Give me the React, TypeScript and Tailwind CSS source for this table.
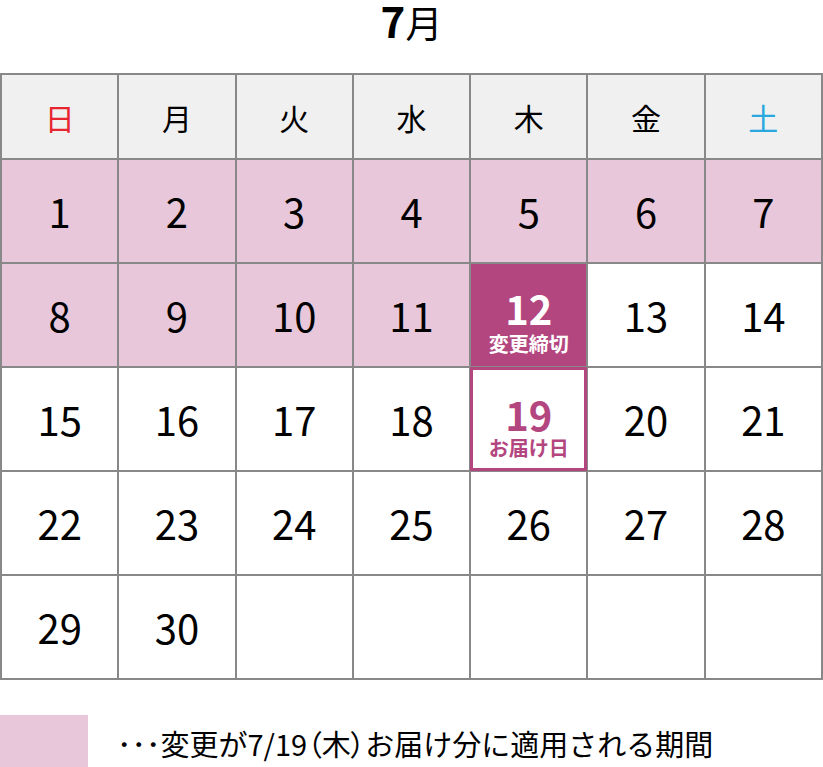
import React from 'react'

const weekdays = [
  { label: '日', color: 'text-[#e8242e]' },
  { label: '月', color: 'text-black' },
  { label: '火', color: 'text-black' },
  { label: '水', color: 'text-black' },
  { label: '木', color: 'text-black' },
  { label: '金', color: 'text-black' },
  { label: '土', color: 'text-[#29a8e0]' },
]

const cjk = "font-['Noto_Sans_CJK_JP',sans-serif]"

function DayCell({ day }: { day: number | null }) {
  if (day === null) return <div className="bg-white" />

  if (day === 12) {
    return (
      <div className={`bg-[#b4467f] flex flex-col items-center pt-[24px] text-white ${cjk}`}>
        <span className="text-[40px] font-bold leading-[40px]">12</span>
        <span className="text-[20px] font-bold leading-[24px] mt-[4px]">変更締切</span>
      </div>
    )
  }

  if (day === 19) {
    return (
      <div className={`bg-white border-[3px] border-[#b4467f] -m-[1px] flex flex-col items-center pt-[24px] text-[#b4467f] ${cjk}`}>
        <span className="text-[40px] font-bold leading-[40px]">19</span>
        <span className="text-[20px] font-bold leading-[24px] mt-[2px]">お届け日</span>
      </div>
    )
  }

  const pink = day <= 11
  return (
    <div className={`${pink ? 'bg-[#e8c7da]' : 'bg-white'} flex items-center justify-center`}>
      <span className={`${cjk} text-[40px] font-normal leading-none text-black`}>{day}</span>
    </div>
  )
}

export default function App() {
  const days: (number | null)[] = [
    ...Array.from({ length: 30 }, (_, i) => i + 1),
    null, null, null, null, null,
  ]

  return (
    <div className="w-[823px] h-[767px] bg-white flex flex-col">
      <div className="h-[73px] flex justify-center items-start">
        <h1 className={`${cjk} text-[37px] leading-[40px] text-black`}>
          <span className="text-[42px] font-semibold">7</span>
          <span className="font-normal">月</span>
        </h1>
      </div>

      <div className="grid grid-cols-7 grid-rows-[83px_repeat(5,102px)] gap-[2px] bg-[#888888] p-[2px]">
        {weekdays.map((w) => (
          <div key={w.label} className="bg-[#f0f0f0] flex items-center justify-center">
            <span className={`${cjk} text-[30px] font-normal leading-none ${w.color}`}>{w.label}</span>
          </div>
        ))}
        {days.map((d, i) => (
          <DayCell key={i} day={d} />
        ))}
      </div>

      <div className="flex items-center mt-[35px]">
        <div className="w-[88px] h-[52px] bg-[#e8c7da] shrink-0" />
        <p className={`${cjk} text-[29px] leading-none text-black ml-[29px] mt-[4px] whitespace-nowrap`}>
          ･･･変更が7/19<span className="[font-feature-settings:'palt']">（木）</span>お届け分に適用される期間
        </p>
      </div>
    </div>
  )
}
